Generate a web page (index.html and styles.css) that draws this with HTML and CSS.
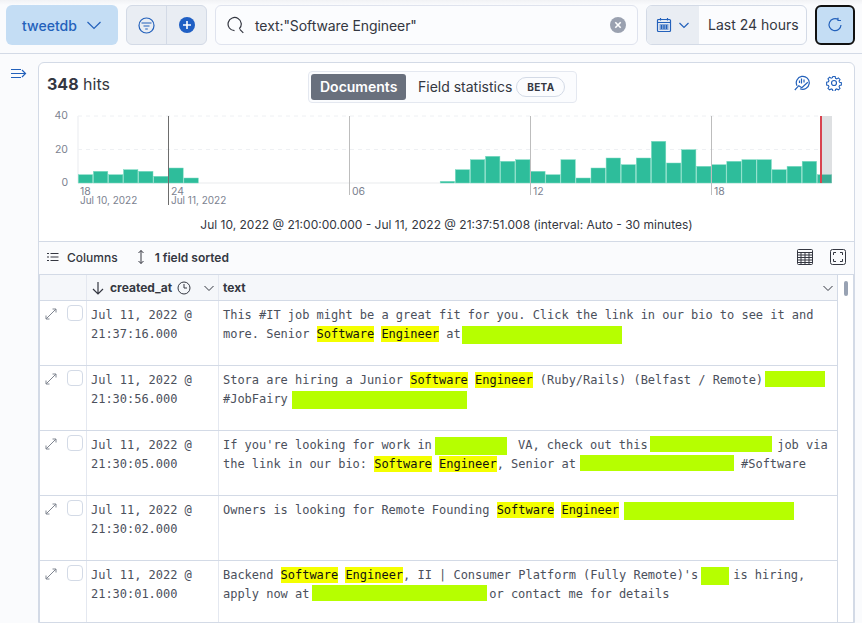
FILE: index.html
```html
<!DOCTYPE html>
<html lang="en">
<head>
    <meta charset="UTF-8">
    <meta name="viewport" content="width=device-width, initial-scale=1.0">
    <title>Discover</title>
    <link rel="stylesheet" href="styles.css">
</head>
<body>
    <header class="topbar">
        <button class="index-btn">
            <span>tweetdb</span>
            <svg class="ico" width="16" height="16" viewBox="0 0 16 16"><path d="M1.5 5l6.5 6.5L14.500 5"/></svg>
        </button>
        <div class="filter-group">
            <div class="filter-btn">
                <svg class="ico" width="17" height="17" viewBox="0 0 17 17"><circle cx="8.500" cy="8.500" r="7.500"/><path d="M3.500 6h10M5.500 9h6M7.200 12h2.600"/></svg>
            </div>
            <div class="filter-btn">
                <svg width="16" height="16" viewBox="0 0 16 16"><circle cx="8" cy="8" r="8" fill="#1f5fc4"/><path d="M8 4v8M4 8h8" stroke="#fff" stroke-width="1.600"/></svg>
            </div>
        </div>
        <div class="search">
            <svg class="ico ico-dark" width="18" height="18" viewBox="0 0 18 18"><path d="M12.300 12.800A6.600 6.600 0 1 0 7.500 14.700M12.800 13.300L16.300 16.800"/></svg>
            <span class="query">text:"Software Engineer"</span>
            <svg class="clear" width="16" height="16" viewBox="0 0 16 16"><circle cx="8" cy="8" r="8" fill="#9aa1b0"/><path d="M5.300 5.300l5.400 5.400M10.700 5.300l-5.400 5.400" stroke="#fff" stroke-width="1.600"/></svg>
        </div>
        <div class="date-picker">
            <div class="date-quick">
                <svg class="ico" width="16" height="16" viewBox="0 0 16 16"><rect x="1.500" y="2.500" width="13" height="12" rx="1"/><path d="M1.500 5.500h13M4.500 1v2.500M11.500 1v2.500M3.500 8h9M3.500 10h9M3.500 12h9M5.500 7.500v5M8 7.500v5M10.500 7.500v5"/></svg>
                <svg class="ico" width="12" height="12" viewBox="0 0 12 12"><path d="M1.500 4l4.500 4.500L10.500 4"/></svg>
            </div>
            <div class="date-label">Last 24 hours</div>
        </div>
        <button class="refresh-btn">
            <svg class="ico" width="16" height="16" viewBox="0 0 16 16"><path d="M11.500 2.800A6 6 0 1 0 14 8M11 .8v2.700h3"/></svg>
        </button>
    </header>

    <div class="layout">
        <aside class="sidebar">
            <svg class="ico" width="16" height="16" viewBox="0 0 16 16"><path d="M0 4.500h10M0 8.500h14M0 12.500h10M11 5l3.500 3.500-3.500 3.500"/></svg>
        </aside>

        <main class="card">
            <div class="hits-row">
                <div class="hits"><strong>348</strong> hits</div>
                <div class="tabs">
                    <span class="tab tab-active">Documents</span>
                    <span class="tab">Field statistics</span>
                    <span class="beta">BETA</span>
                </div>
                <div class="hits-icons">
                    <svg class="ico" width="16" height="16" viewBox="0 0 16 16"><path d="M3 10.800A6.500 6.500 0 1 1 6 13.700M.8 15l4-4.300 3 2 6-5.500M7.500 3.500v5M10 4.500v3M5.500 5.500v2.500"/></svg>
                    <svg class="ico" width="16" height="16" viewBox="0 0 16 16"><circle cx="8" cy="8" r="2.500"/><path d="M6.700.8h2.600l.4 2 1.400.6 1.800-1.100 1.800 1.800-1.100 1.800.6 1.400 2 .4v2.600l-2 .4-.6 1.400 1.100 1.800-1.800 1.800-1.800-1.100-1.400.6-.4 2H6.700l-.4-2-1.400-.6-1.800 1.100-1.800-1.800 1.100-1.800-.6-1.400-2-.4V7l2-.4.6-1.400L1.300 3.400l1.800-1.800 1.800 1.100 1.400-.6z" transform="translate(.8 .8) scale(.9)"/></svg>
                </div>
            </div>

            <svg class="chart" width="815" height="110" viewBox="39 105 815 110">
                <path class="grid" d="M78 116H820M78 149.500H820"/>
                <path class="axis" d="M78 183H832M78 116V183"/>
                <rect class="bar" x="78.300" y="174.700" height="8.300"/>
                <rect class="bar" x="93.400" y="171.300" height="11.700"/>
                <rect class="bar" x="108.500" y="174.700" height="8.300"/>
                <rect class="bar" x="123.500" y="169.700" height="13.300"/>
                <rect class="bar" x="138.600" y="171.300" height="11.700"/>
                <rect class="bar" x="153.700" y="176.300" height="6.700"/>
                <rect class="bar" x="168.800" y="168" height="15"/>
                <rect class="bar" x="183.900" y="178" height="5"/>
                <rect class="bar" x="440.200" y="181.300" height="1.700"/>
                <rect class="bar" x="455.300" y="169.700" height="13.300"/>
                <rect class="bar" x="470.400" y="159.700" height="23.300"/>
                <rect class="bar" x="485.500" y="156.300" height="26.700"/>
                <rect class="bar" x="500.500" y="161.300" height="21.700"/>
                <rect class="bar" x="515.600" y="159.700" height="23.300"/>
                <rect class="bar" x="530.700" y="171.300" height="11.700"/>
                <rect class="bar" x="545.800" y="174.700" height="8.300"/>
                <rect class="bar" x="560.900" y="159.700" height="23.300"/>
                <rect class="bar" x="576" y="178" height="5"/>
                <rect class="bar" x="591" y="168" height="15"/>
                <rect class="bar" x="606.100" y="158" height="25"/>
                <rect class="bar" x="621.200" y="164.700" height="18.300"/>
                <rect class="bar" x="636.300" y="158" height="25"/>
                <rect class="bar" x="651.400" y="141.300" height="41.700"/>
                <rect class="bar" x="666.500" y="163" height="20"/>
                <rect class="bar" x="681.500" y="149.700" height="33.300"/>
                <rect class="bar" x="696.600" y="166.300" height="16.700"/>
                <rect class="bar" x="711.700" y="164.700" height="18.300"/>
                <rect class="bar" x="726.800" y="161.300" height="21.700"/>
                <rect class="bar" x="741.900" y="159.700" height="23.300"/>
                <rect class="bar" x="757" y="159.700" height="23.300"/>
                <rect class="bar" x="772" y="169.700" height="13.300"/>
                <rect class="bar" x="787.100" y="166.300" height="16.700"/>
                <rect class="bar" x="802.200" y="161.300" height="21.700"/>
                <rect class="bar" x="817.300" y="174.700" height="8.300"/>
                <rect class="overlay" x="821" y="116" width="11" height="67"/>
                <path class="tick-major" d="M168.500 116V205"/>
                <path class="tick" d="M349.500 116V195M530.500 116V195M711.500 116V195"/>
                <path class="now" d="M821 116V183"/>
                <text class="label" x="68" y="119" text-anchor="end">40</text>
                <text class="label" x="68" y="152.500" text-anchor="end">20</text>
                <text class="label" x="68" y="186" text-anchor="end">0</text>
                <text class="label" x="80" y="195">18</text>
                <text class="label" x="171" y="195">24</text>
                <text class="label" x="352" y="195">06</text>
                <text class="label" x="533" y="195">12</text>
                <text class="label" x="714" y="195">18</text>
                <text class="label label-date" x="80" y="204">Jul 10, 2022</text>
                <text class="label label-date" x="171" y="204">Jul 11, 2022</text>
            </svg>

            <div class="interval">Jul 10, 2022 @ 21:00:00.000 - Jul 11, 2022 @ 21:37:51.008 (interval: Auto - 30 minutes)</div>

            <div class="toolbar">
                <svg class="ico ico-dark thin" width="12" height="12" viewBox="0 0 12 12"><path d="M0 2.500h2M3.500 2.500h8M0 6h2M3.500 6h8M0 9.500h2M3.500 9.500h8"/></svg>
                <span class="tool-label">Columns</span>
                <svg class="ico ico-dark thin sort-ico" width="10" height="14" viewBox="0 0 10 14"><path d="M5 .5v13M2.500 3L5 .5 7.500 3M2.500 11L5 13.500 7.500 11"/></svg>
                <span class="tool-label tool-strong">1 field sorted</span>
                <svg class="ico ico-dark thin density" width="16" height="16" viewBox="0 0 16 16"><rect x=".5" y=".5" width="15" height="15" rx="1"/><path d="M.5 3.500h15M.5 6h15M.5 8.500h15M.5 11h15M.5 13.500h15M4 3.500v12M8 3.500v12M12 3.500v12"/></svg>
                <svg class="ico ico-dark thin" width="16" height="16" viewBox="0 0 16 16"><rect x=".5" y=".5" width="15" height="15" rx="2"/><path d="M3.500 6V3.500H6M10 3.500h2.500V6M12.500 10v2.500H10M6 12.500H3.500V10"/></svg>
            </div>

            <div class="grid-wrap">
                <div class="table">
                    <div class="row head">
                        <div class="cell"></div>
                        <div class="cell head-date">
                            <svg class="ico ico-dark" width="14" height="14" viewBox="0 0 14 14"><path d="M7 1v12M2 8l5 5 5-5"/></svg>
                            <span>created_at</span>
                            <svg class="ico ico-dark thin" width="14" height="14" viewBox="0 0 14 14"><circle cx="7" cy="7" r="6"/><path d="M7 3v4h3"/></svg>
                            <svg class="ico ico-dark thin head-chev" width="12" height="12" viewBox="0 0 12 12"><path d="M1.500 4l4.500 4.500L10.500 4"/></svg>
                        </div>
                        <div class="cell head-text">
                            <span>text</span>
                            <svg class="ico ico-dark thin head-chev" width="12" height="12" viewBox="0 0 12 12"><path d="M1.500 4l4.500 4.500L10.500 4"/></svg>
                        </div>
                    </div>

                    <div class="row">
                        <div class="cell ctrl">
                            <svg class="expand" width="12" height="12" viewBox="0 0 12 12"><path d="M1 11L11 1M7.500 1H11v3.500M1 7.500V11h3.500"/></svg>
                            <span class="check"></span>
                        </div>
                        <div class="cell mono">Jul 11, 2022 @<br>21:37:16.000</div>
                        <div class="cell mono">This #IT job might be a great fit for you. Click the link in our bio to see it and<br>more. Senior <mark>Software</mark> <mark>Engineer</mark> at<span class="redact tall r1"></span></div>
                    </div>

                    <div class="row">
                        <div class="cell ctrl">
                            <svg class="expand" width="12" height="12" viewBox="0 0 12 12"><path d="M1 11L11 1M7.500 1H11v3.500M1 7.500V11h3.500"/></svg>
                            <span class="check"></span>
                        </div>
                        <div class="cell mono">Jul 11, 2022 @<br>21:30:56.000</div>
                        <div class="cell mono">Stora are hiring a Junior <mark>Software</mark> <mark>Engineer</mark> (Ruby/Rails) (Belfast / Remote)<span class="redact r2"></span><br>#JobFairy<span class="redact tall r3"></span></div>
                    </div>

                    <div class="row">
                        <div class="cell ctrl">
                            <svg class="expand" width="12" height="12" viewBox="0 0 12 12"><path d="M1 11L11 1M7.500 1H11v3.500M1 7.500V11h3.500"/></svg>
                            <span class="check"></span>
                        </div>
                        <div class="cell mono">Jul 11, 2022 @<br>21:30:05.000</div>
                        <div class="cell mono">If you're looking for work in<span class="redact tall r4"></span>VA, check out this<span class="redact r5"></span>job via<br>the link in our bio: <mark>Software</mark> <mark>Engineer</mark>, Senior at<span class="redact r6"></span>#Software</div>
                    </div>

                    <div class="row">
                        <div class="cell ctrl">
                            <svg class="expand" width="12" height="12" viewBox="0 0 12 12"><path d="M1 11L11 1M7.500 1H11v3.500M1 7.500V11h3.500"/></svg>
                            <span class="check"></span>
                        </div>
                        <div class="cell mono">Jul 11, 2022 @<br>21:30:02.000</div>
                        <div class="cell mono">Owners is looking for Remote Founding <mark>Software</mark> <mark>Engineer</mark><span class="redact tall r7"></span></div>
                    </div>

                    <div class="row">
                        <div class="cell ctrl">
                            <svg class="expand" width="12" height="12" viewBox="0 0 12 12"><path d="M1 11L11 1M7.500 1H11v3.500M1 7.500V11h3.500"/></svg>
                            <span class="check"></span>
                        </div>
                        <div class="cell mono">Jul 11, 2022 @<br>21:30:01.000</div>
                        <div class="cell mono">Backend <mark>Software</mark> <mark>Engineer</mark>, II | Consumer Platform (Fully Remote)'s<span class="redact tall r8"></span>is hiring,<br>apply now at<span class="redact r9"></span>or contact me for details</div>
                    </div>
                </div>
                <div class="scrollbar"><span class="thumb"></span></div>
            </div>
        </main>
    </div>
</body>
</html>
```

FILE: styles.css
```css
* {
    box-sizing: border-box;
}

html, body {
    height: 100%;
}

body {
    margin: 0;
    overflow: hidden;
    font-family: Inter, "Noto Sans", sans-serif;
    font-size: 14px;
    color: #343741;
    background-color: #fafbfd;
}

.ico {
    display: block;
    flex: none;
    fill: none;
    stroke: #2361bb;
    stroke-width: 1.2;
}

.ico-dark {
    stroke: #343741;
}

.thin {
    stroke-width: 1;
}

/* top bar */
.topbar {
    display: flex;
    gap: 8px;
    height: 54px;
    padding: 5px 7px 0 6px;
    border-bottom: 1px solid #d3dae6;
    background: linear-gradient(#f1f2f5, #fafbfd 5px);
}

.index-btn {
    display: flex;
    align-items: center;
    justify-content: center;
    gap: 9px;
    width: 112px;
    height: 40px;
    border: none;
    border-radius: 6px;
    background-color: #c4ddf4;
    color: #2361bb;
    font: 500 14px Inter, sans-serif;
}

.filter-group {
    display: flex;
    width: 81px;
    height: 40px;
    border: 1px solid #d3dae6;
    border-radius: 6px;
    background-color: #e9edf3;
}

.filter-btn {
    display: flex;
    flex: 1;
    align-items: center;
    justify-content: center;
}

.filter-btn + .filter-btn {
    border-left: 1px solid #d3dae6;
}

.search {
    display: flex;
    flex: 1;
    align-items: center;
    height: 40px;
    padding: 0 11px 0 11px;
    border: 1px solid #dfe3ee;
    border-radius: 6px;
    background-color: #fbfcfe;
}

.query {
    flex: 1;
    margin-left: 10px;
    margin-top: 1px;
    letter-spacing: -.08px;
}

.date-picker {
    display: flex;
    width: 161px;
    height: 40px;
    border: 1px solid #d3dae6;
    border-radius: 6px;
    overflow: hidden;
    background-color: #fbfcfe;
}

.date-quick {
    display: flex;
    align-items: center;
    gap: 6px;
    width: 52px;
    padding-left: 9px;
    background-color: #e9edf3;
}

.date-label {
    padding-left: 9px;
    line-height: 37px;
}

.refresh-btn {
    display: flex;
    align-items: center;
    justify-content: center;
    width: 40px;
    height: 40px;
    padding: 0;
    border: 2px solid #111;
    border-radius: 6px;
    background-color: #c4ddf4;
}

/* page body */
.layout {
    display: flex;
    height: 569px;
}

.sidebar {
    width: 38px;
    padding: 11px 0 0 11px;
}

.card {
    flex: 1;
    margin: 8px 7px 0 0;
    border: 1px solid #d3dae6;
    border-radius: 6px 6px 0 0;
    background-color: #fff;
    overflow: hidden;
}

.hits-row {
    display: flex;
    align-items: flex-start;
    height: 42px;
    padding: 8px 12px 0 8px;
}

.hits {
    width: 261px;
    font-size: 16px;
    line-height: 26px;
}

.hits strong {
    font-weight: 700;
}

.tabs {
    display: flex;
    align-items: center;
    width: 269px;
    height: 32px;
    padding: 0 2px;
    border: 1px solid #e4e8f0;
    border-radius: 4px;
    background-color: #fbfcfe;
}

.tab {
    padding: 0 9px;
    line-height: 26px;
}

.tab-active {
    width: 95px;
    margin-right: 3px;
    border-radius: 3px;
    background-color: #69707d;
    color: #fff;
    font-weight: 600;
}

.beta {
    width: 49px;
    margin-left: -5px;
    border: 1px solid #d3dae6;
    border-radius: 10px;
    color: #343741;
    font-size: 10px;
    font-weight: 700;
    letter-spacing: .3px;
    line-height: 18px;
    text-align: center;
}

.hits-icons {
    display: flex;
    gap: 16px;
    margin-left: auto;
    margin-top: 4px;
}

.chart {
    display: block;
}

.grid {
    fill: none;
    stroke: #eef0f3;
    stroke-dasharray: 4 4;
}

.axis {
    fill: none;
    stroke: #f1f2f4;
    stroke-width: 1.500;
}

.bar {
    width: 14.400px;
    fill: #2ebd9b;
    stroke: #7edcc4;
    stroke-width: .5;
}

.overlay {
    fill: #69707d;
    fill-opacity: .22;
}

.tick-major {
    stroke: #6d6d6d;
}

.tick {
    stroke: #bdbdbd;
}

.now {
    stroke: #d8434f;
    stroke-width: 2;
}

.label {
    fill: #7c8290;
    font-size: 10.500px;
}

.label-date {
    font-size: 10px;
}

.interval {
    height: 26px;
    padding-top: 1px;
    font-size: 12px;
    line-height: 18px;
    text-align: center;
}

.toolbar {
    display: flex;
    align-items: center;
    height: 34px;
    padding: 0 8px 2px;
    border-top: 1px solid #d3dae6;
    border-bottom: 1px solid #d3dae6;
    background-color: #fafbfd;
}

.tool-label {
    margin-left: 8px;
    font-size: 12px;
    font-weight: 500;
}

.tool-strong {
    margin-left: 9px;
    font-weight: 600;
}

.sort-ico {
    margin-left: 18px;
}

.density {
    margin-left: auto;
    margin-right: 17px;
}

/* table */
.grid-wrap {
    display: flex;
    border-left: 1px solid #d3dae6;
    border-right: 1px solid #d3dae6;
}

.table {
    width: 798px;
    border-right: 1px solid #d3dae6;
}

.scrollbar {
    flex: 1;
    padding: 6px 0 0 6px;
}

.thumb {
    display: block;
    width: 4px;
    height: 15px;
    border-radius: 2px;
    background-color: #98a2b3;
}

.row {
    display: grid;
    grid-template-columns: 47px 132px 1fr;
    height: 65px;
    border-bottom: 1px solid #d3dae6;
}

.row.head {
    height: 26px;
    background-color: #f5f7fa;
    font-size: 12px;
    font-weight: 700;
}

.cell {
    border-right: 1px solid #e4e8f0;
}

.cell:last-child {
    border-right: none;
}

.head-date, .head-text {
    display: flex;
    align-items: center;
    padding-left: 4px;
    gap: 4px;
}

.head-date {
    gap: 5px;
}

.head-chev {
    margin-left: auto;
    margin-right: 3px;
}

.ctrl {
    display: flex;
    align-items: flex-start;
    gap: 10px;
    padding: 4px 0 0 5px;
}

.expand {
    flex: none;
    margin-top: 3px;
    fill: none;
    stroke: #808691;
}

.check {
    flex: none;
    width: 16px;
    height: 16px;
    border: 1px solid #d3dae6;
    border-radius: 4px;
}

.mono {
    padding: 5px 0 0 4px;
    font-family: "DejaVu Sans Mono", "Liberation Mono", monospace;
    font-size: 12px;
    letter-spacing: -.024px;
    line-height: 19px;
    white-space: nowrap;
    color: #4b505c;
}

mark {
    padding: 1px 0;
    background-color: #f4ff00;
    color: #111;
}

/* blacked out names, lime in the source picture */
.redact {
    display: inline-block;
    height: 16px;
    margin-top: -6px;
    margin-bottom: -6px;
    vertical-align: 3px;
    background-color: #b6ff00;
}

.redact.tall {
    height: 18px;
    vertical-align: 0;
}

.r1 { width: 160px; margin-left: 1.400px; }
.r2 { width: 60px; margin-left: 2px; }
.r3 { width: 175px; margin-left: 4.200px; }
.r4 { width: 72px; margin-left: 3.200px; margin-right: 11px; }
.r5 { width: 122px; margin-left: 2.200px; margin-right: 5.400px; }
.r6 { width: 154px; margin-left: 4.200px; margin-right: 7px; }
.r7 { width: 170px; margin-left: 5px; }
.r8 { width: 28px; margin-left: 3px; margin-right: 4px; }
.r9 { width: 175px; margin-left: 2.600px; margin-right: 2.300px; }
```
